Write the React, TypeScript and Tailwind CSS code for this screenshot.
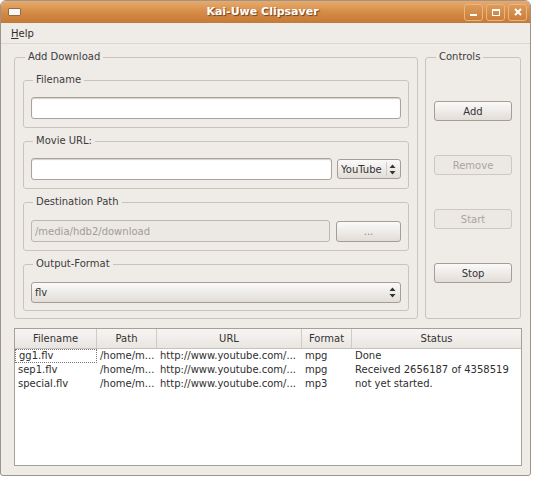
import type { ReactNode } from 'react';

const font = { fontFamily: '"DejaVu Sans", "Liberation Sans", sans-serif' };

// Small GTK "Human"-style group box: fieldset with the title sitting in the top border.
function Group({ title, className, children }: { title: string; className?: string; children: ReactNode }) {
  return (
    <fieldset className={`rounded-[3px] border border-[#c8c3bd] ${className ?? ''}`}>
      <legend className="ml-[2px] px-[3px] text-[10px] leading-[12px] text-[#3c3c3c]">{title}</legend>
      {children}
    </fieldset>
  );
}

function Button({ label, disabled, className }: { label: string; disabled?: boolean; className?: string }) {
  return (
    <div
      className={`flex items-center justify-center rounded-[3px] border text-[10px] ${
        disabled
          ? 'border-[#cdc8c2] bg-[#ece8e4] text-[#aaa59f]'
          : 'border-[#a49e97] bg-gradient-to-b from-[#fbfaf9] to-[#e2ddd8] text-[#333]'
      } ${className ?? ''}`}
    >
      {label}
    </div>
  );
}

function Arrows() {
  return (
    <svg width="7" height="11" viewBox="0 0 7 11" className="shrink-0">
      <path d="M3.5 0.5 L6.5 4 L0.5 4 Z" fill="#333" />
      <path d="M3.5 10.5 L6.5 7 L0.5 7 Z" fill="#333" />
    </svg>
  );
}

const cols = [
  { name: 'Filename', w: 'w-[82px]' },
  { name: 'Path', w: 'w-[60px]' },
  { name: 'URL', w: 'w-[145px]' },
  { name: 'Format', w: 'w-[50px]' },
  { name: 'Status', w: 'flex-1' },
];

const rows = [
  ['gg1.flv', '/home/m...', 'http://www.youtube.com/...', 'mpg', 'Done'],
  ['sep1.flv', '/home/m...', 'http://www.youtube.com/...', 'mpg', 'Received 2656187 of 4358519'],
  ['special.flv', '/home/m...', 'http://www.youtube.com/...', 'mp3', 'not yet started.'],
];

const field = 'rounded-[3px] border border-[#a9a39c] bg-white shadow-[inset_0_1px_1px_#d5d0ca]';
const combo =
  'flex items-center overflow-hidden rounded-[3px] border border-[#a49e97] bg-gradient-to-b from-[#fbfaf9] to-[#e2ddd8] pl-[3px] pr-[4px] text-[10px] text-[#333]';

export default function App() {
  return (
    <div className="h-[479px] w-[534px] overflow-hidden bg-white" style={font}>
      <div className="flex h-[476px] w-[531px] flex-col overflow-hidden rounded-t-[6px] rounded-b-[3px] border border-[#9c948c] bg-[#efebe7]">
        {/* title bar */}
        <div className="flex h-[22px] shrink-0 items-center bg-gradient-to-b from-[#e7ab6c] via-[#d68c46] to-[#c47a38] pl-[7px] pr-[3px]">
          <div className="h-[8px] w-[13px] rounded-[1px] border border-[#8f6a45] bg-[#f8f6f3]" />
          <div className="flex-1 pl-[40px] text-center text-[11px] font-bold text-white [text-shadow:1px_1px_1px_#6b3f16]">
            Kai-Uwe Clipsaver
          </div>
          <div className="flex gap-[3px]">
            {['min', 'max', 'close'].map((k) => (
              <div
                key={k}
                className="flex h-[17px] w-[19px] items-center justify-center rounded-[3px] border border-[#eab57c] bg-gradient-to-b from-[#dd9b5a] to-[#c97e3c]"
              >
                {k === 'min' && <div className="mt-[6px] h-[2px] w-[7px] bg-white" />}
                {k === 'max' && <div className="h-[7px] w-[8px] border border-t-2 border-white" />}
                {k === 'close' && (
                  <svg width="8" height="8" viewBox="0 0 8 8">
                    <path d="M1 1 L7 7 M7 1 L1 7" stroke="white" strokeWidth="2" />
                  </svg>
                )}
              </div>
            ))}
          </div>
        </div>

        {/* menu bar */}
        <div className="flex h-[21px] shrink-0 items-center border-b border-[#dcd7d1] px-[10px] text-[10px] text-[#2e2e2e]">
          <span>
            <span className="underline">H</span>elp
          </span>
        </div>

        <div className="flex flex-1 flex-col pl-[13px] pr-[8px] pt-[7px]">
          <div className="flex gap-[7px]">
            <Group title="Add Download" className="w-[404px] shrink-0 px-[8px] pb-[7px]">
              <div className="flex flex-col gap-[7px] pt-[11px]">
                <Group title="Filename" className="px-[7px] pb-[8px]">
                  <div className={`mt-[11px] h-[22px] ${field}`} />
                </Group>
                <Group title="Movie URL:" className="px-[7px] pb-[8px]">
                  <div className="mt-[11px] flex h-[22px] items-center gap-[5px]">
                    <div className={`h-[22px] flex-1 ${field}`} />
                    <div className={`h-[20px] w-[64px] ${combo}`}>
                      <span className="w-[43px] overflow-hidden whitespace-nowrap">YouTube</span>
                      <div className="mx-[2px] h-[14px] w-px bg-[#d0cbc5]" />
                      <Arrows />
                    </div>
                  </div>
                </Group>
                <Group title="Destination Path" className="px-[7px] pb-[8px]">
                  <div className="mt-[12px] flex h-[22px] items-center gap-[6px]">
                    <div className="flex h-[22px] flex-1 items-center rounded-[3px] border border-[#bdb7b0] bg-[#ece8e4] px-[3px] text-[10px] text-[#a29c96]">
                      /media/hdb2/download
                    </div>
                    <Button label="..." className="h-[21px] w-[65px] !text-[#8a847e]" />
                  </div>
                </Group>
                <Group title="Output-Format" className="px-[7px] pb-[7px]">
                  <div className={`mt-[12px] h-[21px] ${combo}`}>
                    <span className="flex-1">flv</span>
                    <Arrows />
                  </div>
                </Group>
              </div>
            </Group>

            <Group title="Controls" className="w-[96px] shrink-0 px-[8px]">
              <div className="flex flex-col gap-[34px] pt-[38px]">
                <Button label="Add" className="h-[20px]" />
                <Button label="Remove" disabled className="h-[20px]" />
                <Button label="Start" disabled className="h-[20px]" />
                <Button label="Stop" className="h-[20px]" />
              </div>
            </Group>
          </div>

          {/* download list */}
          <div className="mt-[9px] flex h-[138px] w-[508px] flex-col border border-[#a6a09a] bg-white">
            <div className="flex h-[20px] shrink-0 border-b border-[#c7c2bc] bg-gradient-to-b from-[#f7f5f3] to-[#e9e5e1] text-[10px] text-[#333]">
              {cols.map((c, i) => (
                <div
                  key={c.name}
                  className={`${c.w} flex items-center justify-center ${i < cols.length - 1 ? 'border-r border-[#d0cbc5]' : ''}`}
                >
                  {c.name}
                </div>
              ))}
            </div>
            <div className="text-[10px] leading-[14px] text-[#2e2e2e]">
              {rows.map((r, ri) => (
                <div key={ri} className="flex">
                  {r.map((cell, ci) => (
                    <div
                      key={ci}
                      className={`${cols[ci].w} overflow-hidden whitespace-nowrap pl-[3px] ${
                        ri === 0 && ci === 0 ? 'border border-dotted border-[#777] pl-[2px] leading-[12px]' : ''
                      }`}
                    >
                      {cell}
                    </div>
                  ))}
                </div>
              ))}
            </div>
          </div>
        </div>
      </div>
    </div>
  );
}
